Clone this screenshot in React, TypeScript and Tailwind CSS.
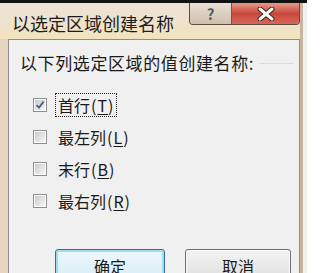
function CheckBox({ checked }: { checked?: boolean }) {
  return (
    <div className="flex h-[14px] w-[14px] shrink-0 items-center justify-center border border-[#8f8f8f] bg-white p-px">
      <div className="relative h-full w-full bg-linear-to-br from-[#cdcdcd] to-[#f5f5f5]">
        {checked && (
          <svg viewBox="0 0 10 10" className="absolute inset-0 h-full w-full">
            <path d="M1.6 5.2 L4 7.6 L8.6 1.6" fill="none" stroke="#4b5d93" strokeWidth="1.8" />
          </svg>
        )}
      </div>
    </div>
  );
}

function Option({
  text,
  mnemonic,
  checked,
  focused,
}: {
  text: string;
  mnemonic: string;
  checked?: boolean;
  focused?: boolean;
}) {
  return (
    <div className="flex h-[24px] items-center">
      <CheckBox checked={checked} />
      <div
        className={
          focused
            ? "ml-[8px] flex h-[24px] items-center border border-dotted border-[#222] px-[2px] text-[16px] leading-none text-[#1a1a1a]"
            : "ml-[8px] flex h-[24px] items-center px-[3px] text-[16px] leading-none text-[#1a1a1a]"
        }
      >
        <span>{text}</span>
        <span className="ml-px tracking-[1px]">
          (<span className="underline underline-offset-2">{mnemonic}</span>)
        </span>
      </div>
    </div>
  );
}

function DialogButton({ label, primary }: { label: string; primary?: boolean }) {
  return (
    <div
      className={
        primary
          ? "flex h-[34px] w-[110px] items-center justify-center rounded-[3px] border border-[#3b6f8f] bg-linear-to-b from-[#eef8fc] to-[#d6ecf5] text-[16px] text-[#1a1a1a] shadow-[inset_0_0_0_2px_#9fdcf2]"
          : "flex h-[34px] w-[106px] items-center justify-center rounded-[3px] border border-[#707070] bg-linear-to-b from-[#f4f4f4] to-[#dddddd] text-[16px] text-[#1a1a1a] shadow-[inset_0_0_0_1px_#fcfcfc]"
      }
    >
      {label}
    </div>
  );
}

export default function App() {
  return (
    <div className="flex h-[273px] w-[307px] flex-col overflow-hidden bg-[#f3f1ee] font-[Noto_Sans_CJK_SC,sans-serif]">
      {/* top edge */}
      <div className="h-[3px] w-full shrink-0 bg-[#111]" />

      {/* window frame */}
      <div className="flex w-[303px] flex-1 flex-col border-r-[3px] border-[#c9b59f] bg-[#e6d5c1]">
        {/* title bar */}
        <div className="flex h-[36px] shrink-0 items-start bg-linear-to-b from-[#eee2d3] via-[#efe2cf] to-[#f1e4bb]">
          <div className="ml-[12px] mt-[10px] text-[18px] leading-[20px] text-[#1c1c1c]">
            以选定区域创建名称
          </div>
          <div className="ml-auto flex h-[22px] overflow-hidden rounded-b-[4px] border border-t-0 border-[#5e4c3c]">
            <div className="flex w-[42px] items-center justify-center border-r border-[#6b5a48] bg-linear-to-b from-[#e9e0d4] to-[#cdbfac]">
              <span className="text-[15px] font-bold leading-none text-[#4a5670]">?</span>
            </div>
            <div className="flex w-[67px] items-center justify-center bg-linear-to-b from-[#e6998c] via-[#c8473b] to-[#d6665b]">
              <svg viewBox="0 0 20 14" className="h-[14px] w-[20px]">
                <path d="M4 2 L16 12 M16 2 L4 12" stroke="#4a1f1a" strokeWidth="5" strokeLinecap="round" />
                <path d="M4 2 L16 12 M16 2 L4 12" stroke="#ffffff" strokeWidth="3" strokeLinecap="round" />
              </svg>
            </div>
          </div>
        </div>

        {/* client area */}
        <div className="ml-[8px] flex flex-1 flex-col border border-b-0 border-[#8d8d8d] bg-[#f0f0f0] pl-[11px] pt-[13px]">
          <div className="flex h-[20px] items-center">
            <span className="text-[17px] leading-[20px] tracking-[0.6px] text-[#1a1a1a]">
              以下列选定区域的值创建名称:
            </span>
            <div className="mx-[6px] h-px flex-1 bg-[#d3dde3]" />
          </div>

          <div className="ml-[13px] mt-[20px] flex flex-col gap-[8px]">
            <Option text="首行" mnemonic="T" checked focused />
            <Option text="最左列" mnemonic="L" />
            <Option text="末行" mnemonic="B" />
            <Option text="最右列" mnemonic="R" />
          </div>

          <div className="ml-[35px] mt-[36px] flex gap-[20px]">
            <DialogButton primary label="确定" />
            <DialogButton label="取消" />
          </div>
        </div>
      </div>
    </div>
  );
}
